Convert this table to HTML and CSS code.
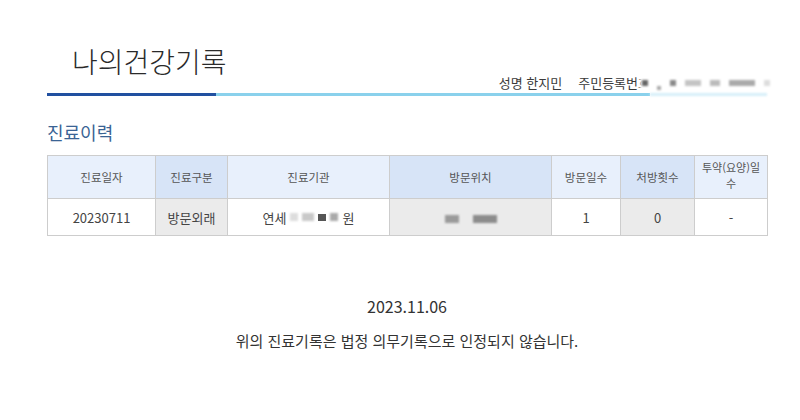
FILE: index.html
```html
<!DOCTYPE html>
<html lang="ko">
<head>
<meta charset="utf-8">
<link rel="stylesheet" href="styles.css">
</head>
<body>
<div class="page">
  <header class="top">
    <h1 class="title">나의건강기록</h1>
    <div class="info">
      <span class="name">성명 한지민</span>
      <span class="rrn">주민등록번호</span>
      <span class="blur-area">
        <i class="bx b1"></i><i class="bx b2"></i><i class="bx b3"></i><i class="bx b4"></i><i class="bx b5"></i><i class="bx b6"></i><i class="bx b7"></i>
      </span>
    </div>
  </header>
  <div class="rule">
    <span class="seg dark"></span>
    <span class="seg light"></span>
    <span class="seg pale"></span>
  </div>

  <h2 class="section">진료이력</h2>

  <table class="grid">
    <colgroup>
      <col style="width:108px"><col style="width:72px"><col style="width:162px"><col style="width:162px"><col style="width:69px"><col style="width:74px"><col style="width:73px">
    </colgroup>
    <thead>
      <tr>
        <th>진료일자</th>
        <th class="alt">진료구분</th>
        <th>진료기관</th>
        <th class="alt">방문위치</th>
        <th>방문일수</th>
        <th class="alt">처방횟수</th>
        <th class="wrap"><span class="ln">투약(요양)일</span><span class="ln">수</span></th>
      </tr>
    </thead>
    <tbody>
      <tr>
        <td>20230711</td>
        <td class="alt">방문외래</td>
        <td><span class="hosp">연세<span class="smear s1"></span><span class="smear s2"></span><span class="smear s3"></span><span class="smear s4"></span>원</span></td>
        <td class="alt"><span class="smear s5"></span><span class="smear s6"></span></td>
        <td>1</td>
        <td class="alt">0</td>
        <td>-</td>
      </tr>
    </tbody>
  </table>

  <p class="date">2023.11.06</p>
  <p class="note">위의 진료기록은 법정 의무기록으로 인정되지 않습니다.</p>
</div>
</body>
</html>
```

FILE: styles.css
```css
html, body {
  margin: 0;
  padding: 0;
  background: #ffffff;
}
body {
  font-family: "Noto Sans CJK KR", "Noto Sans", sans-serif;
  color: #333;
}
.page {
  width: 720px;
  margin-left: 47px;
  padding-top: 45px;
}
.top {
  display: flex;
  justify-content: space-between;
  align-items: flex-end;
  height: 45px;
}
.title {
  margin: 0 0 0 25px;
  font-size: 28px;
  line-height: 32px;
  font-weight: 300;
  color: #2a2a2a;
  align-self: flex-start;
}
.info {
  display: flex;
  align-items: center;
  font-size: 13px;
  line-height: 16px;
  color: #3a3a3a;
  margin-right: -8px;
  margin-bottom: -1px;
}
.name {
  margin-right: 16px;
}
.blur-area {
  display: flex;
  align-items: center;
  gap: 9px;
  width: 133px;
  height: 16px;
  margin-left: -10px;
  padding-left: 2px;
  background: #fff;
  filter: blur(1.2px);
}
.bx {
  display: block;
  height: 6px;
  background: #b9b9b9;
}
.b1 { width: 6px; background: #666; }
.b2 { width: 4px; height: 4px; background: #aaa; margin-top: 10px; }
.b3 { width: 6px; background: #8a8a8a; }
.b4 { width: 16px; background: #c4c4c4; }
.b5 { width: 10px; background: #bbb; }
.b6 { width: 26px; background: #aaa; }
.b7 { width: 6px; background: #ddd; }
.rule {
  display: flex;
  height: 3px;
  margin-top: 3px;
}
.seg { display: block; height: 3px; }
.dark { width: 171px; background: #2150a0; }
.light { width: 439px; background: #8ad1ec; }
.pale { width: 118px; background: #d6eff9; filter: blur(1px); }
.section {
  margin: 25px 0 0 0;
  font-size: 18px;
  line-height: 22px;
  font-weight: 400;
  color: #3a6394;
}
.grid {
  margin-top: 12px;
  width: 720px;
  border-collapse: collapse;
  table-layout: fixed;
}
.grid th, .grid td {
  border: 1px solid #cdcdcd;
  text-align: center;
  padding: 0;
}
.grid th {
  height: 42px;
  background: #e8f0fc;
  font-size: 11.5px;
  font-weight: 400;
  color: #555;
  line-height: 15px;
}
.grid th.alt { background: #d7e4f7; }
.grid th.wrap {
  vertical-align: top;
  padding-top: 3px;
  height: 39px;
  font-size: 11px;
}
.ln {
  display: block;
  line-height: 16px;
}
.grid td {
  height: 36px;
  background: #fff;
  font-size: 13px;
  color: #444;
}
.grid td.alt { background: #ebebeb; }
.hosp {
  display: inline-flex;
  align-items: center;
  gap: 4px;
}
.smear {
  display: inline-block;
  height: 8px;
  background: #b5b5b5;
  filter: blur(0.8px);
}
.s1 { width: 8px; background: #ddd; }
.s2 { width: 12px; background: #c9c9c9; }
.s3 { width: 8px; background: #555; filter: none; height: 7px; }
.s4 { width: 8px; background: #aaa; }
.s5 { width: 14px; background: #9a9a9a; margin-right: 14px; }
.s6 { width: 24px; background: #8c8c8c; }
.date {
  margin: 60px 0 0 0;
  text-align: center;
  font-size: 16px;
  line-height: 20px;
  color: #333;
}
.note {
  margin: 15px 0 0 0;
  text-align: center;
  font-size: 15px;
  line-height: 20px;
  color: #333;
}
```
